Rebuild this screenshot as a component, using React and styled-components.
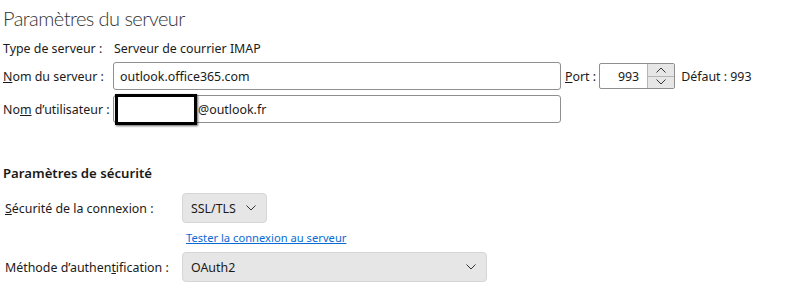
import React from 'react'
import styled, { createGlobalStyle } from 'styled-components'

const Global = createGlobalStyle`
  body {
    margin: 0;
    background: #ffffff;
    font-family: "Noto Sans", "Open Sans", sans-serif;
    font-size: 12.4px;
    color: #1a1a1a;
  }
`

const Page = styled.div`
  width: 790px;
  height: 304px;
  padding: 5px 0 0 3px;
  box-sizing: border-box;
  overflow: hidden;
`

const Title = styled.h1`
  margin: 0 0 3px 0;
  font-family: Lato, "Noto Sans", sans-serif;
  font-size: 20px;
  font-weight: 300;
  letter-spacing: -0.55px;
  color: #333333;
  line-height: 26px;
`

const Row = styled.div`
  display: flex;
  align-items: center;
  height: ${p => p.h || 28}px;
  margin-bottom: ${p => p.mb || 0}px;
`

const Label = styled.div`
  width: ${p => p.w}px;
  flex: none;
  padding-left: ${p => p.pl || 0}px;
  box-sizing: border-box;
  white-space: nowrap;
`

const TextBox = styled.div`
  width: 448px;
  height: 28px;
  box-sizing: border-box;
  border: 1px solid #8f8f8f;
  border-radius: 3px;
  display: flex;
  align-items: center;
  padding-left: 6px;
  background: #fff;
`

const Redacted = styled.span`
  display: inline-block;
  width: 76px;
  height: 25px;
  margin-left: -5px;
  margin-right: 1px;
  border: 3px solid #000;
  background: #fff;
  box-shadow: 1px 1px 2px rgba(0, 0, 0, 0.6);
`

const PortLabel = styled.span`
  margin-left: 4px;
  margin-right: 3px;
`

const Spinner = styled.div`
  display: flex;
  width: 76px;
  height: 26px;
  box-sizing: border-box;
  border: 1px solid #8f8f8f;
  border-radius: 2px;
  overflow: hidden;
`

const SpinValue = styled.div`
  flex: 1;
  display: flex;
  align-items: center;
  justify-content: flex-end;
  padding-right: 8px;
`

const SpinButtons = styled.div`
  width: 26px;
  display: flex;
  flex-direction: column;
  border-left: 1px solid #b5b5b5;
`

const SpinButton = styled.div`
  flex: 1;
  background: #e6e6e6;
  display: flex;
  align-items: center;
  justify-content: center;
  & + & {
    border-top: 1px solid #b5b5b5;
  }
`

const Default = styled.span`
  margin-left: 6px;
`

const Section = styled.h2`
  margin: 41px 0 11px 0;
  font-size: 13.2px;
  font-weight: 600;
  line-height: 18px;
  color: #1a1a1a;
`

const Select = styled.div`
  width: ${p => p.w}px;
  height: 30px;
  box-sizing: border-box;
  background: #e6e6e6;
  border: 1px solid #d6d6d6;
  border-radius: 4px;
  display: flex;
  align-items: center;
  justify-content: space-between;
  padding: 0 10px 0 8px;
`

const LinkRow = styled.div`
  padding-left: 183px;
  height: 29px;
  display: flex;
  align-items: center;
`

const Link = styled.a`
  color: #0a6ad4;
  text-decoration: underline;
  font-size: 11.2px;
  cursor: pointer;
`

const Chevron = ({ up }) => (
  <svg width="10" height="6" viewBox="0 0 10 6">
    <path
      d={up ? 'M0.5 5.5 L5 1 L9.5 5.5' : 'M0.5 0.5 L5 5 L9.5 0.5'}
      fill="none"
      stroke="#333"
      strokeWidth="1"
    />
  </svg>
)

export default function App() {
  return (
    <Page>
      <Global />
      <Title>Paramètres du serveur</Title>
      <Row h={28}>
        <Label w={111}>Type de serveur :</Label>
        <span>Serveur de courrier IMAP</span>
      </Row>
      <Row h={28} mb={5}>
        <Label w={110}><u>N</u>om du serveur :</Label>
        <TextBox>outlook.office365.com</TextBox>
        <PortLabel><u>P</u>ort :</PortLabel>
        <Spinner>
          <SpinValue>993</SpinValue>
          <SpinButtons>
            <SpinButton><Chevron up /></SpinButton>
            <SpinButton><Chevron /></SpinButton>
          </SpinButtons>
        </Spinner>
        <Default>Défaut : 993</Default>
      </Row>
      <Row h={28}>
        <Label w={110}>No<u>m</u> d’utilisateur :</Label>
        <TextBox>
          <Redacted />@outlook.fr
        </TextBox>
      </Row>
      <Section>Paramètres de sécurité</Section>
      <Row h={30}>
        <Label w={179} pl={2}><u>S</u>écurité de la connexion :</Label>
        <Select w={85}>
          <span>SSL/TLS</span>
          <Chevron />
        </Select>
      </Row>
      <LinkRow>
        <Link>Tester la connexion au serveur</Link>
      </LinkRow>
      <Row h={30}>
        <Label w={179} pl={2}>Méthode d’authen<u>t</u>ification :</Label>
        <Select w={305}>
          <span>OAuth2</span>
          <Chevron />
        </Select>
      </Row>
    </Page>
  )
}
